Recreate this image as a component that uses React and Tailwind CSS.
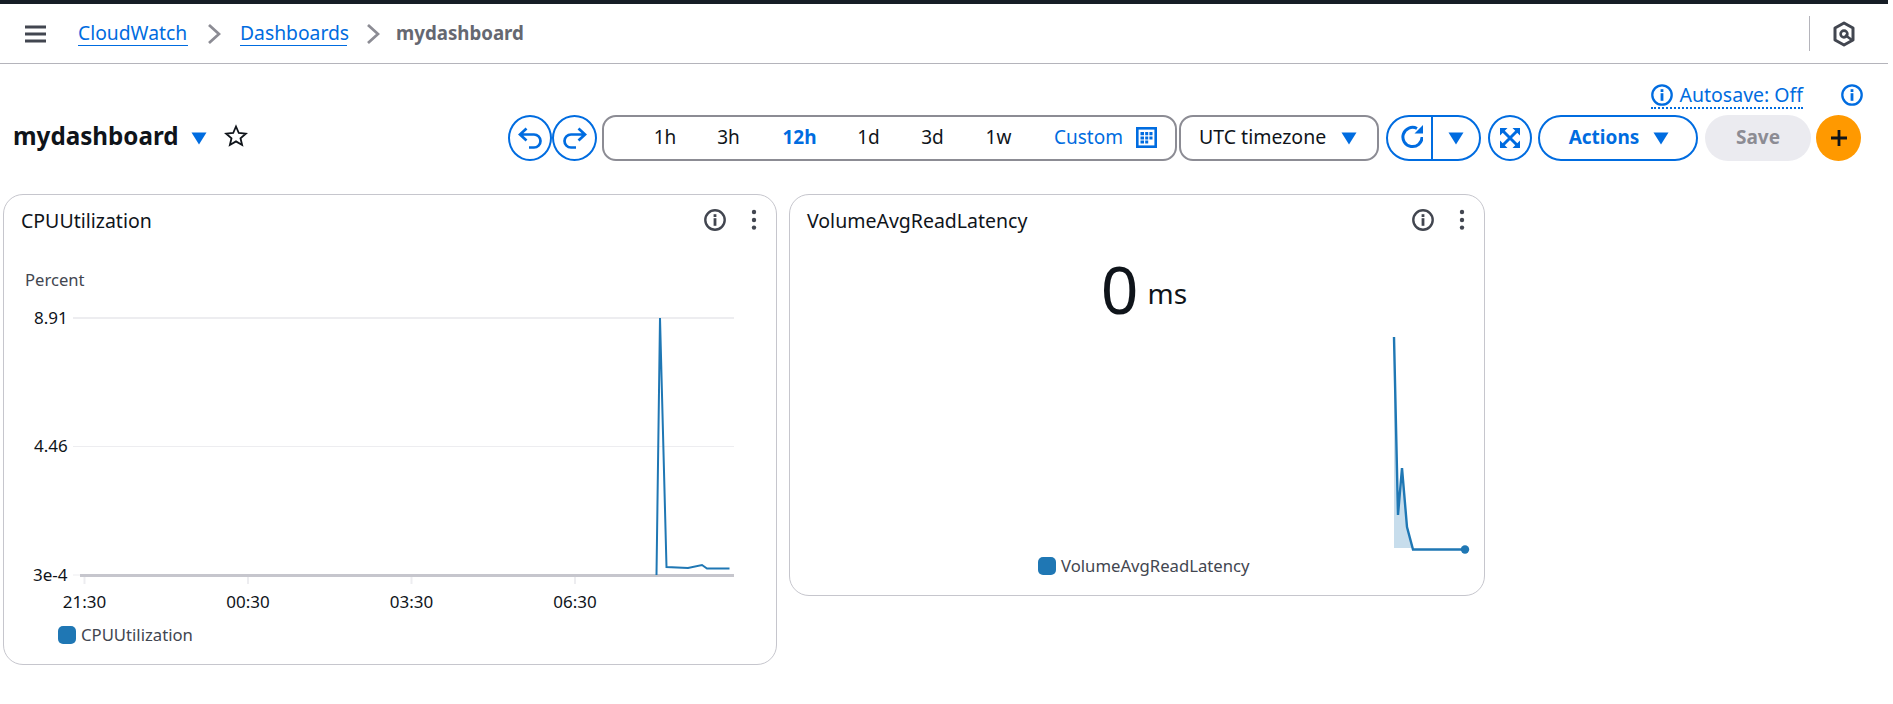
const BLUE = "#006ce0";
const DARK = "#424650";
const SERIES = "#1f77b4";

function Circle({ className = "", children }) {
  return (
    <div className={`flex items-center justify-center h-[46px] rounded-[50%] border-2 border-[#006ce0] bg-white ${className}`}>
      {children}
    </div>
  );
}

function Caret({ w = 16, h = 13, color = BLUE }) {
  return (
    <svg width={w} height={h} viewBox="0 0 16 13" className="shrink-0">
      <path d="M0.5 0.5H15.5L8 12.5Z" fill={color} />
    </svg>
  );
}

function InfoIcon({ size = 22, color = BLUE, sw = 2.3 }) {
  return (
    <svg width={size} height={size} viewBox="0 0 22 22" className="shrink-0">
      <circle cx="11" cy="11" r="9.7" fill="none" stroke={color} strokeWidth={sw} />
      <rect x="9.6" y="9.2" width="2.8" height="7.6" fill={color} />
      <rect x="9.6" y="5.2" width="2.8" height="2.8" fill={color} />
    </svg>
  );
}

function Dots() {
  return (
    <svg width="6" height="22" viewBox="0 0 6 22" className="shrink-0">
      <circle cx="3" cy="3" r="2.2" fill={DARK} />
      <circle cx="3" cy="11" r="2.2" fill={DARK} />
      <circle cx="3" cy="18.6" r="2.2" fill={DARK} />
    </svg>
  );
}

function Chevron({ className }) {
  return (
    <svg width="14" height="22" viewBox="0 0 14 22" className={`shrink-0 ${className}`}>
      <path d="M2 2L12 11L2 20" stroke="#8c8c94" strokeWidth="2.8" fill="none" />
    </svg>
  );
}

function Header() {
  return (
    <header className="flex items-center h-[59px] border-b border-[#b4b4bb] pl-[25px] box-content">
      <svg width="21" height="18" viewBox="0 0 21 18" className="shrink-0">
        <path d="M0 2H21M0 9H21M0 16H21" stroke={DARK} strokeWidth="2.8" fill="none" />
      </svg>
      <a className="ml-[32px] text-[19.3px] leading-[24px] text-[#006ce0] border-b border-[#006ce0] w-[110px] whitespace-nowrap">CloudWatch</a>
      <Chevron className="ml-[19px]" />
      <a className="ml-[19px] text-[19.3px] leading-[24px] text-[#006ce0] border-b border-[#006ce0] w-[107px] whitespace-nowrap">Dashboards</a>
      <Chevron className="ml-[19px]" />
      <span className="ml-[16px] text-[18.7px] leading-[24px] font-bold text-[#656871] whitespace-nowrap pb-px">mydashboard</span>
      <div className="ml-auto flex items-center h-[35px] w-[79px] border-l border-[#b4b4bb] pl-[23px]">
        <svg width="22" height="26" viewBox="0 0 22 26" className="shrink-0">
          <path d="M11 2L20 7V19L11 24L2 19V7Z" fill="none" stroke={DARK} strokeWidth="3" strokeLinejoin="round" />
          <circle cx="11" cy="13" r="3.4" fill="none" stroke={DARK} strokeWidth="2.6" />
          <path d="M12 14L19 19" stroke={DARK} strokeWidth="2.6" />
        </svg>
      </div>
    </header>
  );
}

const ranges = [
  { t: "1h", c: "w-[64px]" },
  { t: "3h", c: "w-[63px]" },
  { t: "12h", c: "w-[79px] font-bold text-[#006ce0]" },
  { t: "1d", c: "w-[59px]" },
  { t: "3d", c: "w-[69px]" },
  { t: "1w", c: "w-[63px]" },
];

function Toolbar() {
  return (
    <div className="flex items-center h-[46px] pl-[13px] pr-[27px]">
      <h1 className="text-[24.2px] leading-[32px] font-bold text-[#0f141a] whitespace-nowrap m-0 -mt-[5px]">mydashboard</h1>
      <div className="ml-[12px]"><Caret /></div>
      <svg width="24" height="24" viewBox="0 0 24 24" className="ml-[17px] -mt-[5px] shrink-0">
        <path d="M12 2.5L14.8 9L21.8 9.6L16.5 14.2L18.1 21L12 17.4L5.9 21L7.5 14.2L2.2 9.6L9.2 9Z" fill="none" stroke="#0f141a" strokeWidth="1.8" strokeLinejoin="miter" />
      </svg>
      <div className="ml-auto flex items-center">
        <Circle className="w-[44px]">
          <svg width="26" height="26" viewBox="0 0 26 26">
            <path d="M9.5 3.5L3 9.5L9.5 15.5M3 9.5H17A6.5 6.5 0 0 1 17 22.5H12" fill="none" stroke={BLUE} strokeWidth="2.7" />
          </svg>
        </Circle>
        <Circle className="w-[45px]">
          <svg width="26" height="26" viewBox="0 0 26 26">
            <path d="M16.5 3.5L23 9.5L16.5 15.5M23 9.5H9A6.5 6.5 0 0 0 9 22.5H14" fill="none" stroke={BLUE} strokeWidth="2.7" />
          </svg>
        </Circle>
        <div className="ml-[5px] flex items-center w-[575px] h-[46px] rounded-[14px] border-2 border-[#8c8c94] pl-[29px] text-[19px] text-[#0f141a]">
          {ranges.map((r) => (
            <span key={r.t} className={`text-center leading-[24px] -mt-[3px] ${r.c}`}>{r.t}</span>
          ))}
          <span className="ml-[24px] text-[#006ce0] leading-[24px] -mt-[3px] whitespace-nowrap w-[82px]">Custom</span>
          <svg width="21" height="21" viewBox="0 0 21 21" className="shrink-0 -mt-[1px]">
            <rect x="1.3" y="1.3" width="18.4" height="18.4" fill="none" stroke={BLUE} strokeWidth="2.6" />
            <path d="M4.5 5H8V8.2H4.5ZM9.2 5H12.2V8.2H9.2ZM13.4 5H16.5V8.2H13.4ZM4.5 9.4H8V12.4H4.5ZM9.2 9.4H12.2V12.4H9.2ZM13.4 9.4H16.5V12.4H13.4ZM4.5 13.6H8V16.5H4.5ZM9.2 13.6H12.2V16.5H9.2Z" fill={BLUE} />
          </svg>
        </div>
        <div className="ml-[2px] flex items-center justify-between w-[200px] h-[46px] rounded-[14px] border-2 border-[#8c8c94] pl-[18px] pr-[20px] text-[19.5px] text-[#0f141a]">
          <span className="leading-[24px] -mt-[3px] whitespace-nowrap">UTC timezone</span>
          <Caret />
        </div>
        <div className="ml-[7px] flex items-center w-[95px] h-[46px] rounded-[23px] border-2 border-[#006ce0]">
          <div className="flex items-center justify-center w-[45px] h-full border-r-2 border-[#006ce0]">
            <svg width="26" height="28" viewBox="-3.5 2 26 28">
              <path d="M21.6 15A9.6 9.6 0 1 1 16.5 6.5" fill="none" stroke={BLUE} strokeWidth="3" />
              <path d="M22.5 3V11.5H14Z" fill={BLUE} />
            </svg>
          </div>
          <div className="flex items-center justify-center flex-1"><Caret /></div>
        </div>
        <Circle className="ml-[7px] w-[44px]">
          <svg width="22" height="22" viewBox="0 0 22 22">
            <path d="M1 1H8.5L1 8.5ZM21 1V8.5L13.5 1ZM21 21H13.5L21 13.5ZM1 21V13.5L8.5 21Z" fill={BLUE} />
            <path d="M3 3L19 19M19 3L3 19" fill="none" stroke={BLUE} strokeWidth="3" />
          </svg>
        </Circle>
        <div className="ml-[6px] flex items-center justify-center gap-[14px] w-[160px] h-[46px] pl-[2px] rounded-[23px] border-2 border-[#006ce0] text-[19px] font-bold text-[#006ce0]">
          <span className="leading-[24px] -mt-[3px]">Actions</span>
          <Caret />
        </div>
        <div className="ml-[7px] flex items-center justify-center w-[106px] h-[46px] rounded-[23px] bg-[#ebebf0] text-[19px] font-bold text-[#8c8c94]">
          <span className="leading-[24px] -mt-[3px]">Save</span>
        </div>
        <div className="ml-[5px] flex items-center justify-center w-[45px] h-[46px] rounded-[50%] bg-[#ff9900]">
          <svg width="20" height="20" viewBox="0 0 20 20">
            <path d="M10 2V18M2 10H18" stroke="#0f141a" strokeWidth="2.8" />
          </svg>
        </div>
      </div>
    </div>
  );
}

function Legend({ label, className = "" }) {
  return (
    <div className={`flex items-center gap-[5px] ${className}`}>
      <span className="w-[18px] h-[18px] rounded-[5px] bg-[#1f77b4] shrink-0" />
      <span className="text-[16.7px] leading-[20px] text-[#424650] whitespace-nowrap">{label}</span>
    </div>
  );
}

function CardHead({ title }) {
  return (
    <div className="flex items-center h-[50px] shrink-0 pl-[17px] pr-[19px]">
      <h2 className="flex-1 text-[19.5px] leading-[24px] font-normal text-[#0f141a] m-0 mt-[2px]">{title}</h2>
      <div className="flex items-center gap-[25px]">
        <InfoIcon color={DARK} sw={2.4} />
        <Dots />
      </div>
    </div>
  );
}

function CpuChart() {
  const text = { fontFamily: "'Noto Sans', sans-serif", fontSize: 17, fill: "#0f141a" };
  const ticks = [[84.5, "21:30"], [248, "00:30"], [411.5, "03:30"], [575, "06:30"]];
  return (
    <svg width="772" height="385" viewBox="0 0 772 385" className="block">
      <g transform="translate(-4,-245)">
        <text x="25" y="286" style={{ ...text, fill: "#424650", fontSize: 16.6 }}>Percent</text>
        <text x="34" y="324" style={text}>8.91</text>
        <text x="34" y="452" style={text}>4.46</text>
        <text x="33" y="581" style={text}>3e-4</text>
        <path d="M73 318H734" stroke="#ededf0" strokeWidth="2" />
        <path d="M73 446.5H734" stroke="#ededf0" strokeWidth="1" />
        <path d="M73 575H80" stroke="#ededf0" strokeWidth="1" />
        <path d="M80 575.5H734" stroke="#c6c6cd" strokeWidth="3" />
        {ticks.map(([x, t]) => (
          <g key={t}>
            <path d={`M${x} 577V584`} stroke="#ededf0" strokeWidth="2" />
            <text x={x} y="608" textAnchor="middle" style={text}>{t}</text>
          </g>
        ))}
        <path d="M656.5 575L660 318L666.5 567L688 568L702 565L707 568.5L729.5 568.5" fill="none" stroke={SERIES} strokeWidth="2" />
      </g>
    </svg>
  );
}

function Spark() {
  return (
    <svg width="100" height="225" viewBox="1384 330 100 225" className="block">
      <path d="M1394 337L1398 515L1402 468L1407 527L1413 548H1394Z" fill={SERIES} fillOpacity="0.25" />
      <path d="M1394 337L1398 515L1402 468L1407 527L1413 549.5H1465" fill="none" stroke={SERIES} strokeWidth="2.4" />
      <circle cx="1465" cy="549.5" r="4.2" fill={SERIES} />
    </svg>
  );
}

export default function App() {
  return (
    <div className="w-[1888px] h-[704px] bg-white overflow-hidden font-['Noto_Sans',sans-serif]">
      <div className="h-[4px] bg-[#161d26]" />
      <Header />
      <div className="flex items-center justify-end h-[29px] mt-[16px] pr-[25px] text-[19.5px]">
        <span className="flex items-center gap-[7px] border-b-2 border-dotted border-[#006ce0] h-[27px] mt-[2px] text-[#006ce0]">
          <InfoIcon />
          <span className="whitespace-nowrap">Autosave: Off</span>
        </span>
        <span className="ml-[38px]"><InfoIcon /></span>
      </div>
      <div className="mt-[6px]"><Toolbar /></div>
      <div className="flex items-start gap-[12px] ml-[3px] mt-[33px]">
        <div className="flex flex-col w-[774px] h-[471px] rounded-[20px] border border-[#c6c6cd]">
          <CardHead title="CPUUtilization" />
          <CpuChart />
          <Legend label="CPUUtilization" className="-mt-[5px] ml-[54px]" />
        </div>
        <div className="flex flex-col w-[696px] h-[402px] rounded-[20px] border border-[#c6c6cd]">
          <CardHead title="VolumeAvgReadLatency" />
          <div className="flex items-baseline justify-center h-[80px] mt-[3px] pl-[14px] text-[#0f141a]">
            <span className="text-[66px] leading-[80px] font-normal">0</span>
            <span className="ml-[9px] text-[28px] leading-[30px] font-normal -translate-y-[10px]">ms</span>
          </div>
          <div className="flex justify-end mt-[2px]"><Spark /></div>
          <Legend label="VolumeAvgReadLatency" className="mt-[1px] ml-[248px]" />
        </div>
      </div>
    </div>
  );
}
